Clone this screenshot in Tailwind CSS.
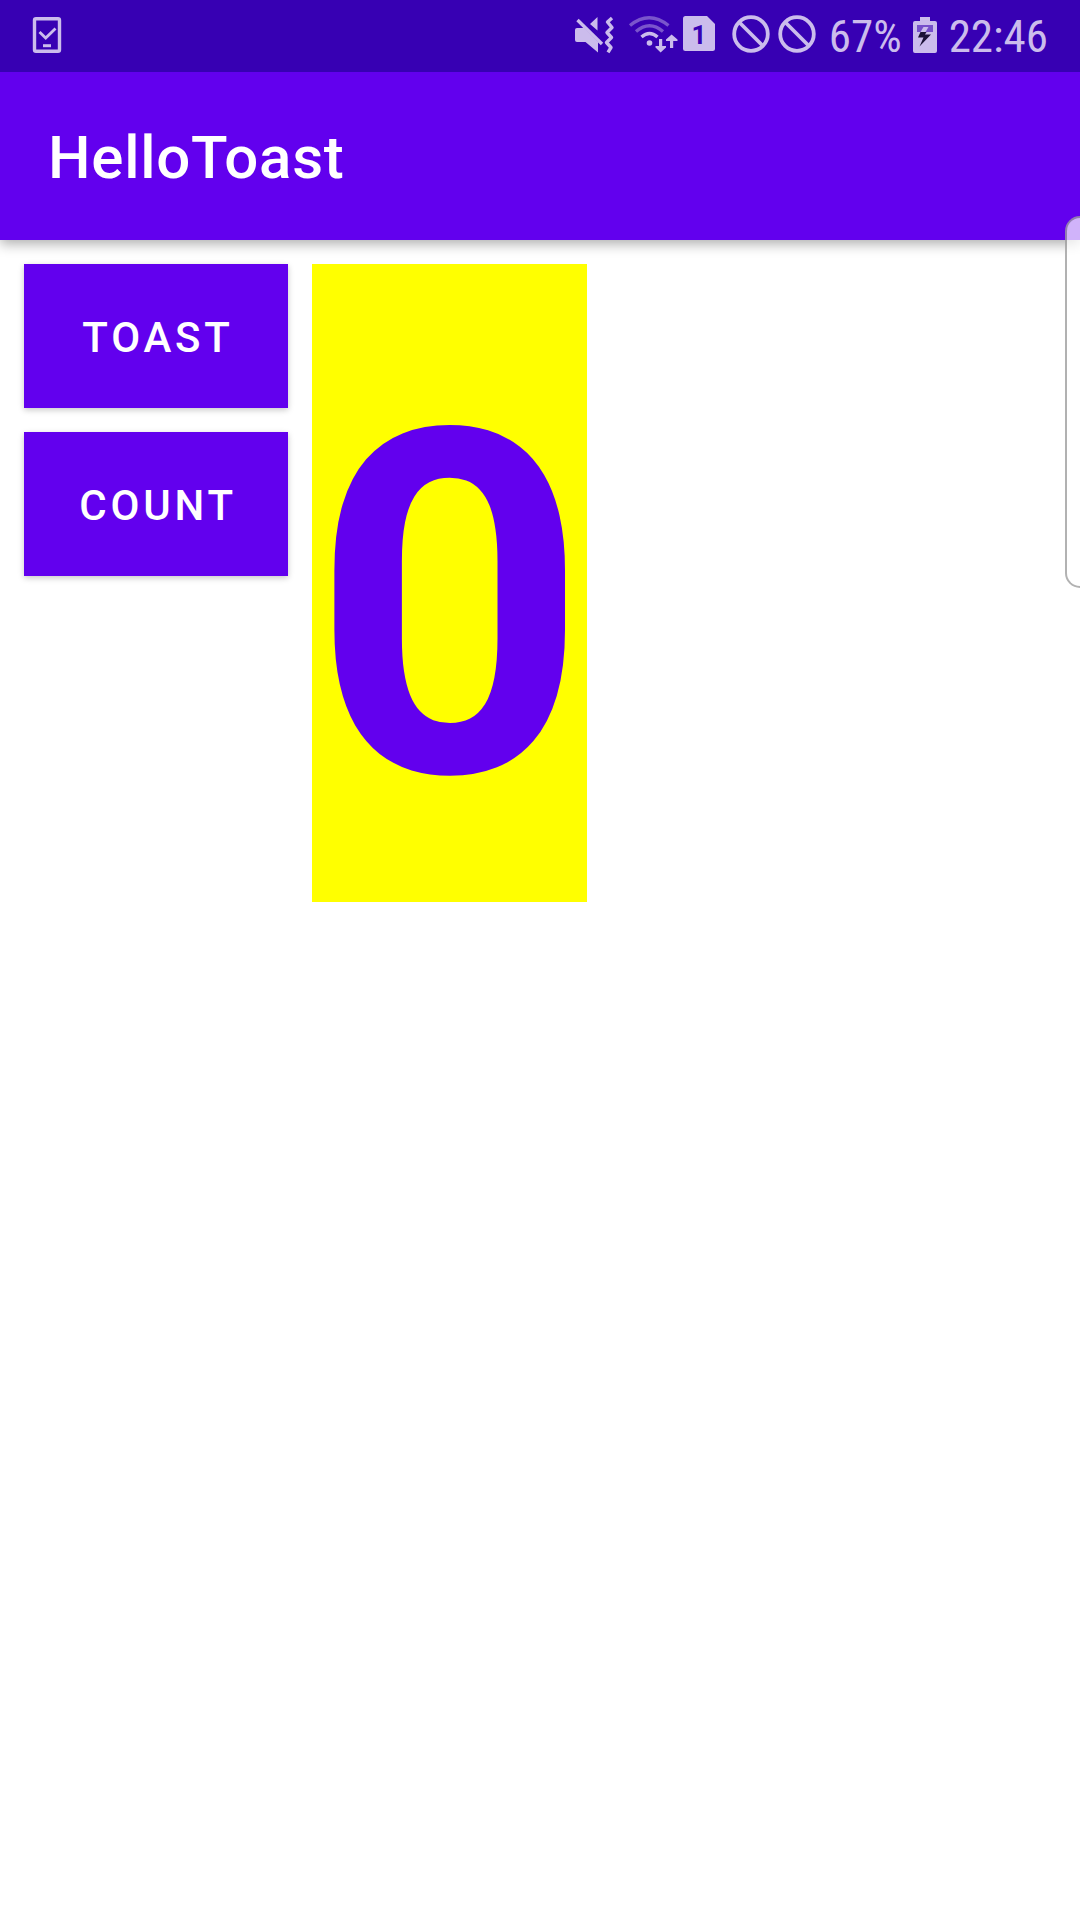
<!DOCTYPE html>
<html lang="en">
<head>
<meta charset="utf-8">
<meta name="viewport" content="width=device-width, initial-scale=1">
<title>HelloToast</title>
<script src="https://cdn.jsdelivr.net/npm/@tailwindcss/browser@4"></script>
</head>
<body class="relative min-h-screen overflow-x-hidden bg-white font-['Roboto',sans-serif]">
  <!-- System status bar -->
  <div class="relative z-10 flex h-18 items-center bg-[#3700b3] px-8 text-[#cbbcec]">
    <svg class="h-18 w-8" viewBox="32 0 32 72" fill="none" stroke="currentColor" aria-hidden="true">
      <rect x="34.5" y="18.7" width="25" height="32.6" rx="1.5" stroke-width="3.4"/>
      <path d="M39.5 32l6.2 6L55.5 28.500" stroke-width="2.8"/>
      <path d="M43 45.700h8" stroke-width="3"/>
    </svg>
    <div class="ml-auto flex items-center">
      <svg class="mr-4 h-18 w-10" viewBox="574 0 40 72" aria-hidden="true">
        <path d="M576 28h7l14 14v10.500L584.500 42H576q-2 0-2-2V30q0-2 2-2zM589 24l7.500-7V30.500z" fill="currentColor"/>
        <path d="M576.500 20L601 44" fill="none" stroke="currentColor" stroke-width="3.4"/>
        <path d="M611 18l-4.500 4 4.500 5.500-5 5 4.500 5-5 5 4.500 5-3 4.800" fill="none" stroke="currentColor" stroke-width="3.4" stroke-linejoin="round"/>
      </svg>
      <svg class="mr-1 h-18 w-12 overflow-visible" viewBox="630 0 48 72" fill="none" stroke="currentColor" stroke-width="3.4" aria-hidden="true">
        <path d="M629 25.500Q648 10 667.500 25.500M635 31.500Q648.500 20 662 31.500" opacity=".45"/>
        <path d="M640.500 37Q648.500 30 656.500 37"/>
        <circle cx="648.500" cy="43" r="2.800" fill="currentColor" stroke="none"/>
        <path d="M658 39h3.200v7H665v1.500L659.600 52.500 654.500 47.500V46H658zM669 48h3.200v-7H676.500v-1.500L670.600 34.500 665 39.500V41h4z" fill="currentColor" stroke="none"/>
      </svg>
      <svg class="mr-4 h-18 w-8" viewBox="682 0 32 72" aria-hidden="true">
        <path d="M684.500 16H706l8 8v24.500q0 2.500-2.500 2.500h-27q-2.500 0-2.500-2.500v-30q0-2.500 2.500-2.500z" fill="currentColor"/>
        <text x="698" y="44" text-anchor="middle" class="fill-[#3700b3] font-['Roboto',sans-serif] text-[26px] font-bold">1</text>
      </svg>
      <svg class="mr-1.5 h-18 w-10" viewBox="731 0 40 72" fill="none" stroke="currentColor" stroke-width="3.8" aria-hidden="true">
        <circle cx="751" cy="34" r="16.800"/><path d="M739.500 22.500l23 23"/>
      </svg>
      <svg class="mr-3 h-18 w-10" viewBox="731 0 40 72" fill="none" stroke="currentColor" stroke-width="3.8" aria-hidden="true">
        <circle cx="751" cy="34" r="16.800"/><path d="M739.500 22.500l23 23"/>
      </svg>
      <span class="pt-0.5 font-['Roboto_Condensed','Liberation_Sans_Narrow','Roboto',sans-serif] text-[45px] leading-18">67%</span>
      <svg class="mr-3 ml-[11px] h-18 w-6" viewBox="913 0 24 72" aria-hidden="true">
        <path d="M920 17h10v4h5q2 0 2 2v28q0 2-2 2h-20q-2 0-2-2V23q0-2 2-2h5z" fill="currentColor"/>
        <path d="M917 25h16v7h-16z" fill="#7650ca"/>
        <path d="M923.500 27h5l-3 5h-5z" fill="currentColor"/>
        <path d="M920.500 32h6l-1.500 2.500h6L919.500 46.500l4-9H918z" fill="#1c1238"/>
      </svg>
      <time class="pt-0.5 font-['Roboto_Condensed','Liberation_Sans_Narrow','Roboto',sans-serif] text-[45px] leading-18">22:46</time>
    </div>
  </div>

  <!-- App bar -->
  <header class="flex h-42 items-center bg-[#6200ee] px-12 pt-1 shadow-[0_4px_12px_rgba(0,0,0,0.32)]">
    <h1 class="text-[60px] leading-18 font-medium tracking-[0.0125em] text-white">HelloToast</h1>
  </header>

  <main class="flex items-start gap-6 p-6">
    <div class="flex w-66 flex-col gap-6">
      <button type="button" class="h-36 bg-[#6200ee] pt-0.5 pl-1 text-[42px] font-medium tracking-[0.09em] text-white uppercase shadow-[0_2px_6px_rgba(0,0,0,0.22)]">Toast</button>
      <button type="button" class="h-36 bg-[#6200ee] pt-0.5 pl-1 text-[42px] font-medium tracking-[0.09em] text-white uppercase shadow-[0_2px_6px_rgba(0,0,0,0.22)]">Count</button>
    </div>
    <output class="block bg-[#ffff00] pt-12 text-[480px] leading-[590px] font-bold text-[#6200ee]">0</output>
  </main>

  <!-- Edge panel handle -->
  <div class="absolute top-54 right-0 h-93 w-[15px] rounded-l-[18px] border-2 border-r-0 border-black/30 bg-white/70"></div>
</body>
</html>
